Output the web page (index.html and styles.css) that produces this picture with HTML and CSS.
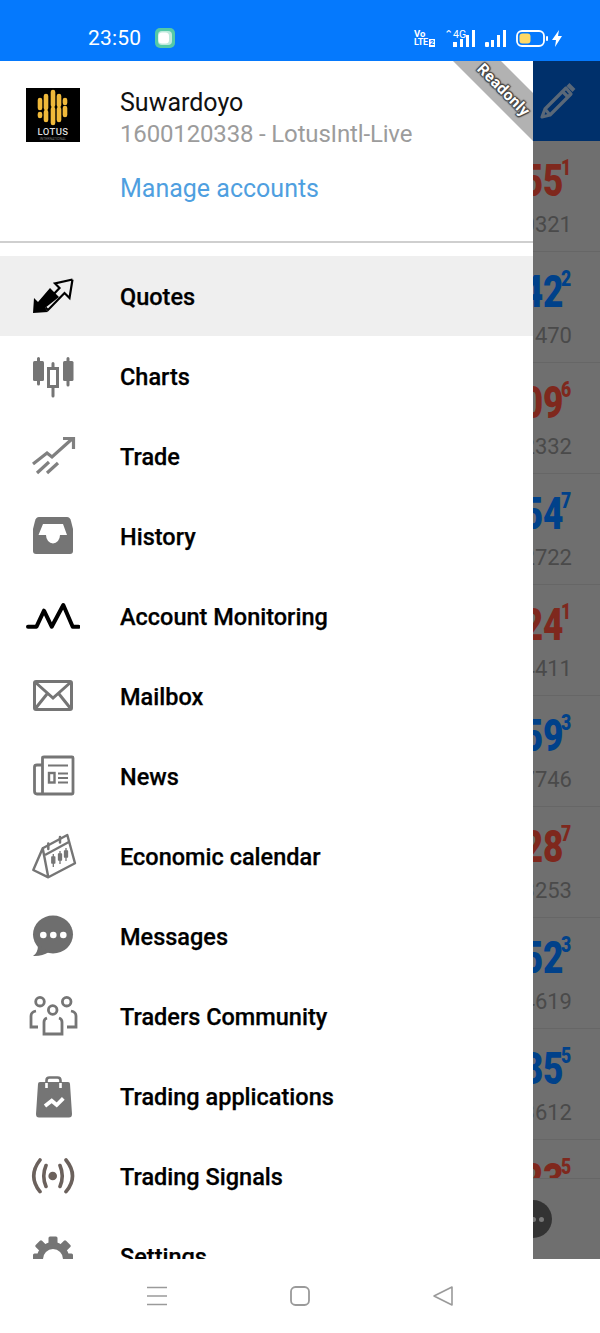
FILE: index.html
```html
<!DOCTYPE html>
<html lang="en">
<head>
<meta charset="utf-8">
<title>Navigation drawer</title>
<link rel="stylesheet" href="styles.css">
</head>
<body>
<div class="screen">
  <header class="status">
    <div class="status-left">
      <span class="clock">23:50</span>
      <svg class="app-icon" width="20" height="20" viewBox="0 0 20 20"><rect width="20" height="20" rx="5" fill="#55c9a6"/><rect x="3" y="3" width="14" height="14" rx="4" fill="#bfeadd"/><rect x="3.5" y="4.5" width="10.5" height="11" rx="3.5" fill="#fff"/></svg>
    </div>
    <div class="status-right">
      <div class="volte"><span>Vo</span><span class="volte-low">LTE<b class="sim">2</b></span></div>
      <div class="net">
        <span class="net-label">⌃4G</span>
        <svg width="22" height="17" viewBox="0 0 22 17" fill="#fff"><rect x="0" y="12" width="4" height="5"/><rect x="7" y="9" width="3" height="8"/><rect x="13" y="5" width="3" height="12"/><rect x="19" y="0" width="3" height="17"/></svg>
      </div>
      <svg width="21" height="17" viewBox="0 0 21 17" fill="#fff"><rect x="0" y="12" width="4" height="5" rx="1"/><rect x="6" y="10" width="3" height="7"/><rect x="12" y="5" width="3" height="12"/><rect x="18" y="0" width="3" height="17"/></svg>
      <svg width="32" height="17" viewBox="0 0 32 17"><rect x="1" y="1" width="27" height="15" rx="5" fill="none" stroke="#fff" stroke-width="1.8"/><rect x="3.5" y="3.5" width="11" height="10" rx="3" fill="#ffd966"/><rect x="30" y="6" width="2" height="5" rx="1" fill="#fff"/></svg>
      <svg class="bolt" width="10" height="17" viewBox="0 0 10 17"><path d="M7 0 L0 10 H4 L3 17 L10 6 H6Z" fill="#fff"/></svg>
    </div>
  </header>

  <div class="main">
    <nav class="drawer">
      <div class="account">
        <svg class="logo" width="54" height="54" viewBox="0 0 54 54">
          <rect width="54" height="54" fill="#000"/>
          <g stroke="#f0b93a" stroke-width="4.600" stroke-linecap="round">
            <path d="M14 12V20M20 8V20M27 4V17M33 8V17M39 12V15"/>
            <path d="M14 26V28M20 24V32M27 21V35M33 21V32M39 20V27"/>
          </g>
          <text x="27" y="47" class="logo-text">LOTUS</text>
          <text x="27" y="52" class="logo-sub">INTERNATIONAL</text>
        </svg>
        <div class="account-info">
          <div class="account-name">Suwardoyo</div>
          <div class="account-id">1600120338 - LotusIntl-Live</div>
          <div class="account-link">Manage accounts</div>
        </div>
      </div>
      <ul class="menu">
        <li class="item active">
          <svg class="ico" width="54" height="54" viewBox="0 0 54 54"><path d="M7 44 L8 29 L12 33 L24 19 L33 28 L19 39 L22 43Z" fill="#000"/><path d="M46.5 10.500 L29 14.500 L33.500 19 L26 27 M46.500 10.500 L43.500 29 L38.500 24 L22 41 L19.500 38.500" fill="none" stroke="#000" stroke-width="2.200" stroke-linejoin="miter"/></svg>
          <span class="label">Quotes</span>
        </li>
        <li class="item">
          <svg class="ico" width="54" height="54" viewBox="0 0 54 54" fill="#757575" stroke="#757575"><g stroke-width="3" stroke-linecap="round"><path d="M12.500 9.500V35M27 14.500V47M42 9.500V36"/></g><rect x="7" y="12" width="11" height="20" rx="1.500" stroke="none"/><rect x="37" y="12" width="10.500" height="20" rx="1.500" stroke="none"/><rect x="22.500" y="19.500" width="9" height="18" fill="#fff" stroke-width="3"/></svg>
          <span class="label">Charts</span>
        </li>
        <li class="item">
          <svg class="ico" width="54" height="54" viewBox="0 0 54 54" fill="none" stroke="#808080" stroke-width="3.200"><path d="M7 35 L21 24 L26 28 L46 10M37 9.500 H47.500 V20M11 44 L23 33M21 44 L32 34"/></svg>
          <span class="label">Trade</span>
        </li>
        <li class="item">
          <svg class="ico" width="54" height="54" viewBox="0 0 54 54"><path d="M13 8 H41 Q44 8 45 12 L47 20 V42 Q47 45 44 45 H10 Q7 45 7 42 V20 L9 12 Q10 8 13 8Z" fill="#757575"/><path d="M17 15 H37 L41 26 H34 A7 8.500 0 0 1 20 26 H12.500Z" fill="#fff"/></svg>
          <span class="label">History</span>
        </li>
        <li class="item">
          <svg class="ico" width="54" height="54" viewBox="0 0 54 54" fill="none" stroke="#000" stroke-width="4" stroke-linecap="round" stroke-linejoin="round"><path d="M2 37.700 H10.500 L18 21.700 L25.700 37.700 L37.300 16 L46.700 37.700 H52.500"/></svg>
          <span class="label">Account Monitoring</span>
        </li>
        <li class="item">
          <svg class="ico" width="54" height="54" viewBox="0 0 54 54" fill="none" stroke="#757575" stroke-width="3"><rect x="8.500" y="12.500" width="37" height="28" rx="1.500"/><path d="M9 13 L27 29 L45 13M9 40 L21 25M45 40 L33 25"/></svg>
          <span class="label">Mailbox</span>
        </li>
        <li class="item">
          <svg class="ico" width="54" height="54" viewBox="0 0 54 54" fill="none" stroke="#757575" stroke-width="2.800"><path d="M16.500 45 V9 Q16.500 8 18 8 H46 Q47 8 47 9 V44 Q47 45 46 45 H11 Q8.500 45 8.500 42 V18 Q8.500 16 11 16 H16.500"/><path d="M22 16.500 H42M32 24.500 H42M32 29 H42M32 33.500 H42" stroke-width="2"/><rect x="23" y="24" width="5.500" height="9.500" stroke-width="2.400"/></svg>
          <span class="label">News</span>
        </li>
        <li class="item">
          <svg class="ico" width="54" height="54" viewBox="0 0 54 54" fill="none" stroke="#757575" stroke-width="2.400" stroke-linejoin="round"><path d="M16.700 19.300 L41.300 6 L49 34.300 L22.300 48.300 L7.300 41 L16.700 19.300 L22.300 48.300"/><path d="M19 26 L43.300 12.700"/><path d="M22.300 20 V14.500M34 13.500 V8" stroke-width="2.500" stroke-linecap="round"/><g fill="#757575" stroke-width="1.300"><path d="M27.300 25 V38M34 22 V35M40 19 V32"/><rect x="25.800" y="28" width="3" height="6"/><rect x="32.500" y="25" width="3" height="6"/><rect x="38.500" y="22" width="3" height="6"/></g></svg>
          <span class="label">Economic calendar</span>
        </li>
        <li class="item">
          <svg class="ico" width="54" height="54" viewBox="0 0 54 54"><ellipse cx="27" cy="25.500" rx="20" ry="19" fill="#6e6e6e"/><path d="M12 36 Q12 44 7 47 Q16 47.500 23 43Z" fill="#6e6e6e"/><g fill="#fff"><circle cx="17.300" cy="26" r="3.300"/><circle cx="27.300" cy="26" r="3.300"/><circle cx="37.300" cy="26" r="3.300"/></g></svg>
          <span class="label">Messages</span>
        </li>
        <li class="item">
          <svg class="ico" width="54" height="54" viewBox="0 0 54 54" fill="none" stroke="#757575" stroke-width="2.800"><circle cx="14" cy="12.700" r="4.300"/><circle cx="40.700" cy="12.700" r="4.300"/><circle cx="26.700" cy="21" r="4.300"/><path d="M10 22 Q5 23 5 27 V38 H12M45 22 Q50 23 50 27 V38 H41M21 29 Q18 30 18 33 V45 H36 V33 Q36 30 33 29"/></svg>
          <span class="label">Traders Community</span>
        </li>
        <li class="item">
          <svg class="ico" width="54" height="54" viewBox="0 0 54 54"><path d="M14 13 H42 Q44 13 44 15 L46 45 Q46 48.500 43 48.500 H13 Q10 48.500 10 45 L12 15 Q12 13 14 13Z" fill="#757575"/><path d="M20.500 19 V11.500 Q20.500 8.500 23.500 8.500 H31.500 Q34.500 8.500 34.500 11.500 V19" fill="none" stroke="#757575" stroke-width="2.600"/><path d="M20.500 14 V19M34.500 14 V19" stroke="#fff" stroke-width="2.600"/><path d="M19 37 L25.700 31.700 L30.700 36 L37.300 29.300" fill="none" stroke="#fff" stroke-width="3.800"/></svg>
          <span class="label">Trading applications</span>
        </li>
        <li class="item">
          <svg class="ico" width="54" height="54" viewBox="0 0 54 54" fill="none" stroke="#6b615c" stroke-width="3.600" stroke-linecap="round"><circle cx="26.700" cy="27" r="4.300" fill="#6b615c" stroke="none"/><path d="M20 16.500 Q15.500 27 20 37.500M34 16.500 Q38.500 27 34 37.500M14 11 Q1.500 27 14 42.700M40 11 Q53 27 40 42.700"/></svg>
          <span class="label">Trading Signals</span>
        </li>
        <li class="item">
          <svg class="ico" width="54" height="54" viewBox="0 0 54 54"><g fill="#757575"><circle cx="27" cy="29" r="16"/><rect x="22.500" y="7.500" width="9" height="8" rx="1.500"/><rect x="22.500" y="7.500" width="9" height="8" rx="1.500" transform="rotate(45 27 29)"/><rect x="22.500" y="7.500" width="9" height="8" rx="1.500" transform="rotate(-45 27 29)"/><rect x="22.500" y="9" width="9" height="8" rx="1.500" transform="rotate(90 27 29)"/><rect x="22.500" y="9" width="9" height="8" rx="1.500" transform="rotate(-90 27 29)"/></g><circle cx="27" cy="30" r="10" fill="#fff"/></svg>
          <span class="label">Settings</span>
        </li>
      </ul>
      <div class="ribbon-shape"></div>
      <span class="ribbon-text">Readonly</span>
    </nav>

    <aside class="behind">
      <div class="behind-top">
        <svg width="38" height="38" viewBox="0 0 38 38" fill="none" stroke="#5a6878" stroke-width="3.200" stroke-linejoin="round"><path d="M7 27 L4 35 L12 33 L33 12 L28 6Z"/><path d="M24 9 L30 15M7 27 L12 33" /><path d="M30 2.500 L36 8.500" stroke-width="4"/></svg>
      </div>
      <div class="rows">
        <div class="row sell"><div class="big"><span class="digits">655</span><sup class="pip">1</sup></div><div class="small">0321</div></div>
        <div class="row buy"><div class="big"><span class="digits">842</span><sup class="pip">2</sup></div><div class="small">1470</div></div>
        <div class="row sell"><div class="big"><span class="digits">309</span><sup class="pip">6</sup></div><div class="small">2332</div></div>
        <div class="row buy"><div class="big"><span class="digits">654</span><sup class="pip">7</sup></div><div class="small">2722</div></div>
        <div class="row sell"><div class="big"><span class="digits">324</span><sup class="pip">1</sup></div><div class="small">4411</div></div>
        <div class="row buy"><div class="big"><span class="digits">659</span><sup class="pip">3</sup></div><div class="small">7746</div></div>
        <div class="row sell"><div class="big"><span class="digits">128</span><sup class="pip">7</sup></div><div class="small">3253</div></div>
        <div class="row buy"><div class="big"><span class="digits">652</span><sup class="pip">3</sup></div><div class="small">4619</div></div>
        <div class="row buy"><div class="big"><span class="digits">335</span><sup class="pip">5</sup></div><div class="small">3612</div></div>
        <div class="row sell"><div class="big"><span class="digits">523</span><sup class="pip">5</sup></div><div class="small">1100</div></div>
      </div>
      <div class="behind-bar">
        <div class="fab"><i></i><i></i><i></i></div>
      </div>
    </aside>
  </div>

  <footer class="navbar">
    <svg width="20" height="20" viewBox="0 0 20 20" stroke="#9a9a9a" stroke-width="1.600"><path d="M0 1.500H20M0 10H20M0 18.500H20"/></svg>
    <svg width="20" height="20" viewBox="0 0 20 20" fill="none" stroke="#9a9a9a" stroke-width="1.800"><rect x="1" y="1" width="18" height="18" rx="4.500"/></svg>
    <svg width="20" height="20" viewBox="0 0 20 20" fill="none" stroke="#9a9a9a" stroke-width="1.600" stroke-linejoin="round"><path d="M19 1 V19 L1 10Z"/></svg>
  </footer>
</div>
</body>
</html>
```

FILE: styles.css
```css
* { box-sizing: border-box; }
html, body { margin: 0; padding: 0; }
body { font-family: Roboto, "Liberation Sans", sans-serif; background: #fff; }
.screen { width: 600px; height: 1333px; display: flex; flex-direction: column; overflow: hidden; }

.status { height: 61px; flex: none; background: #0579fd; color: #fff; display: flex; align-items: center; justify-content: space-between; padding: 15px 38px 0 88px; }
.status-left { display: flex; align-items: center; gap: 14px; }
.clock { font-size: 21px; letter-spacing: .2px; }
.status-right { display: flex; align-items: center; gap: 10px; }
.status-right svg { display: block; }
.status-right .bolt { margin-left: -6px; }
.volte { display: flex; flex-direction: column; font-size: 9.500px; font-weight: 700; line-height: 9px; width: 20px; white-space: nowrap; }
.volte-low { font-size: 9px; letter-spacing: -.2px; }
.sim { display: inline-block; background: #fff; color: #0579fd; font-size: 7px; line-height: 8px; padding: 0 1px; margin-left: 1px; vertical-align: 0; }
.net { position: relative; width: 31px; display: flex; justify-content: flex-end; }
.net-label { position: absolute; left: 0; top: -1px; font-size: 10.500px; line-height: 12px; white-space: nowrap; }

.main { flex: 1; display: flex; min-height: 0; }
.drawer { width: 533px; flex: none; background: #fff; overflow: hidden; position: relative; }

.account { height: 182px; border-bottom: 2px solid #cfcfcf; display: flex; align-items: flex-start; padding: 27px 0 0 26px; gap: 40px; }
.logo { display: block; flex: none; }
.logo-text { fill: #ddd; font-family: Roboto, sans-serif; font-size: 9.500px; font-weight: 500; text-anchor: middle; letter-spacing: .4px; }
.logo-sub { fill: #777; font-family: Roboto, sans-serif; font-size: 3.500px; text-anchor: middle; }
.account-info { display: flex; flex-direction: column; }
.account-name { font-size: 25px; line-height: 30px; color: #111; }
.account-id { font-size: 24px; line-height: 32px; color: #9c9c9c; letter-spacing: -.16px; }
.account-link { font-size: 25px; line-height: 32px; color: #4f9fe0; margin-top: 23px; }

.menu { list-style: none; margin: 13px 0 0; padding: 0; }
.item { height: 80px; display: flex; align-items: center; padding-left: 26px; gap: 40px; }
.item.active { background: #efefef; }
.ico { display: block; flex: none; }
.label { font-size: 23.500px; font-weight: 500; color: #000; padding-top: 2px; -webkit-text-stroke: .25px #000; }

.ribbon-shape { position: absolute; right: 0; top: 0; width: 80px; height: 80px; background: #b2b2b2; clip-path: polygon(0 0, 48px 0, 80px 32px, 80px 80px); }
.ribbon-text { position: absolute; right: -4px; top: 19px; font-size: 15.500px; font-weight: 700; line-height: 20px; color: #fff; letter-spacing: .3px; transform: rotate(45deg); text-shadow: 0 0 2px #444, 1px 1px 1px #444, -1px -1px 1px #444, 1px -1px 1px #444, -1px 1px 1px #444; }

.behind { flex: 1; background: #6f6f6f; display: flex; flex-direction: column; overflow: hidden; min-width: 0; }
.behind-top { height: 80px; flex: none; background: #00306b; display: flex; align-items: center; padding-left: 5px; }
.rows { flex: 1; min-height: 0; overflow: hidden; }
.row { height: 111px; border-bottom: 1px solid #666; display: flex; flex-direction: column; align-items: flex-end; padding: 15px 28px 0 0; }
.big { display: flex; align-items: flex-start; height: 50px; white-space: nowrap; }
.digits { font-size: 44px; font-weight: 900; line-height: 50px; transform: scaleX(.8); transform-origin: right center; }
.pip { font-size: 22px; font-weight: 900; line-height: 24px; vertical-align: baseline; transform: scaleX(.8); transform-origin: left center; margin: 0 -2px 0 -2px; }
.sell { color: #7f281d; }
.buy { color: #00418a; }
.small { font-size: 22px; line-height: 26px; color: #4a4a4a; margin-top: 6px; }
.behind-bar { height: 81px; flex: none; background: #6f6f6f; border-top: 1px solid #666; display: flex; align-items: center; }
.fab { width: 38px; height: 38px; border-radius: 50%; background: #333; margin-left: -19px; flex: none; display: flex; align-items: center; justify-content: center; gap: 3px; }
.fab i { width: 5px; height: 5px; border-radius: 50%; background: #777; }

.navbar { height: 74px; flex: none; background: #fff; display: flex; align-items: flex-start; justify-content: space-between; padding: 27px 147px 0 147px; }
.navbar svg { display: block; }
```
